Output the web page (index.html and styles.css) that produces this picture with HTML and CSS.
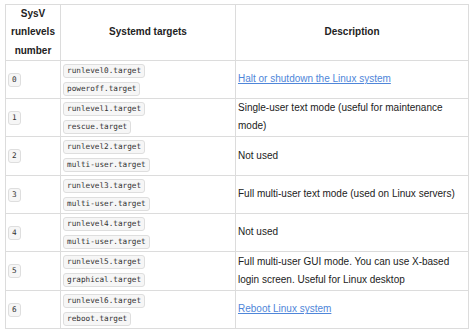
FILE: index.html
```html
<!DOCTYPE html>
<html>
<head>
<meta charset="utf-8">
<link rel="stylesheet" href="styles.css">
</head>
<body>
<div class="wrap">
<table class="rl">
  <colgroup><col class="c1"><col class="c2"><col class="c3"></colgroup>
  <thead>
    <tr><th>SysV runlevels number</th><th>Systemd targets</th><th>Description</th></tr>
  </thead>
  <tbody>
    <tr><td><code>0</code></td><td class="tg"><code>runlevel0.target</code><br><code>poweroff.target</code></td><td><a href="#">Halt or shutdown the Linux system</a></td></tr>
    <tr><td><code>1</code></td><td class="tg"><code>runlevel1.target</code><br><code>rescue.target</code></td><td>Single-user text mode (useful for maintenance mode)</td></tr>
    <tr class="t"><td><code>2</code></td><td class="tg"><code>runlevel2.target</code><br><code>multi-user.target</code></td><td>Not used</td></tr>
    <tr><td><code>3</code></td><td class="tg"><code>runlevel3.target</code><br><code>multi-user.target</code></td><td>Full multi-user text mode (used on Linux servers)</td></tr>
    <tr><td><code>4</code></td><td class="tg"><code>runlevel4.target</code><br><code>multi-user.target</code></td><td>Not used</td></tr>
    <tr class="t"><td><code>5</code></td><td class="tg"><code>runlevel5.target</code><br><code>graphical.target</code></td><td>Full multi-user GUI mode. You can use X-based login screen. Useful for Linux desktop</td></tr>
    <tr><td><code>6</code></td><td class="tg"><code>runlevel6.target</code><br><code>reboot.target</code></td><td><a href="#">Reboot Linux system</a></td></tr>
  </tbody>
</table>
</div>
</body>
</html>
```

FILE: styles.css
```css
html, body {
  margin: 0;
  padding: 0;
  background: #fff;
}
.wrap {
  padding: 4px 0 0 5px;
}
.rl {
  border-collapse: collapse;
  table-layout: fixed;
  width: 463px;
  font-family: "Liberation Sans", Arial, sans-serif;
  font-size: 10px;
  color: #222;
}
.c1 { width: 55px; }
.c2 { width: 175px; }
.c3 { width: 233px; }
.rl th, .rl td {
  border: 1px solid #dcdcdc;
  padding: 0 2px;
  vertical-align: middle;
  text-align: left;
  line-height: 18px;
}
.rl th {
  font-weight: bold;
  text-align: center;
  height: 54px;
  line-height: 18.3px;
}
.rl tbody tr td { height: 37px; }
.rl tbody tr.t td { height: 38px; }
.rl td.tg { line-height: 18px; }
.rl code {
  display: inline-block;
  font-family: "DejaVu Sans Mono", "Liberation Mono", monospace;
  font-size: 7.7px;
  line-height: 12px;
  padding: 0 3px;
  border: 1px solid #dedede;
  border-radius: 3px;
  background: #f6f6f6;
  color: #333;
  vertical-align: middle;
}
.rl a {
  color: #4f86d9;
  text-decoration: underline;
}
```
